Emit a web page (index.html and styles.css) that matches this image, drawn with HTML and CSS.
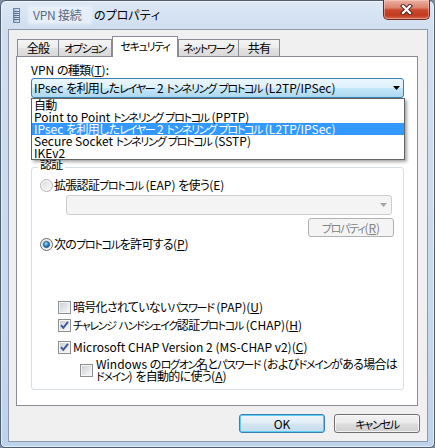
FILE: index.html
```html
<!DOCTYPE html>
<html lang="ja">
<head>
<meta charset="utf-8">
<title>VPN 接続 のプロパティ</title>
<link rel="stylesheet" href="styles.css">
</head>
<body>
<svg class="defs" width="0" height="0" aria-hidden="true">
  <defs>
    <linearGradient id="rdis" x1="0" y1="0" x2="1" y2="1">
      <stop offset="0" stop-color="#dcdcdc"/>
      <stop offset="1" stop-color="#fafafa"/>
    </linearGradient>
    <linearGradient id="rnorm" x1="0" y1="0" x2="1" y2="1">
      <stop offset="0" stop-color="#c9cdd2"/>
      <stop offset="1" stop-color="#f7f7f7"/>
    </linearGradient>
    <radialGradient id="rdot" cx="0.4" cy="0.35" r="0.7">
      <stop offset="0" stop-color="#a6e0fb"/>
      <stop offset="0.55" stop-color="#2f86c8"/>
      <stop offset="1" stop-color="#174f8c"/>
    </radialGradient>
    <linearGradient id="cbg" x1="0" y1="0" x2="1" y2="1">
      <stop offset="0" stop-color="#cdd1d7"/>
      <stop offset="1" stop-color="#f7f7f7"/>
    </linearGradient>
    <linearGradient id="icong" x1="0" y1="0" x2="1" y2="0">
      <stop offset="0" stop-color="#9fb4cc"/>
      <stop offset="1" stop-color="#e4ecf5"/>
    </linearGradient>
  </defs>
</svg>

<div class="window">
  <div class="titlebar">
    <svg class="app-icon" width="7" height="15" viewBox="0 0 7 15">
      <rect x="0.5" y="0.5" width="6" height="14" fill="url(#icong)" stroke="#6d84a3"/>
      <path d="M1 3.5h5M1 5.5h5M1 7.5h5M1 9.5h5M1 11.5h5" stroke="#5b7498" stroke-width="1"/>
    </svg>
    <div class="title"><span class="title-name">VPN 接続</span><span class="title-rest">のプロパティ</span></div>
    <div class="close-btn">
      <svg width="13" height="11" viewBox="0 0 13 11">
        <path d="M3 2L10 9M10 2L3 9" stroke="#4a2a24" stroke-width="4.2" stroke-linecap="square"/>
        <path d="M3 2L10 9M10 2L3 9" stroke="#ffffff" stroke-width="2.2" stroke-linecap="square"/>
      </svg>
    </div>
  </div>

  <div class="client">
    <div class="tabs">
      <div class="tab tab-general"><span class="ja">全般</span></div>
      <div class="tab tab-options"><span class="ka">オプション</span></div>
      <div class="tab tab-active tab-security"><span class="ka">セキュリティ</span></div>
      <div class="tab tab-network"><span class="ka">ネットワーク</span></div>
      <div class="tab tab-sharing"><span class="ja">共有</span></div>
    </div>

    <div class="panel">
      <div class="field-label">VPN <span class="ja">の種類</span>(<u>T</u>):</div>
      <div class="combo-wrap">
        <div class="combo combo-hot">
          <span class="combo-text">IPsec <span class="ja">を利用した<span class="ka">レイヤー</span></span> 2 <span class="ka">トンネリング</span> <span class="ka">プロトコル</span> (L2TP/IPSec)</span>
          <svg class="combo-arrow" width="7" height="4" viewBox="0 0 7 4"><path d="M0 0h7L3.5 4z" fill="#000"/></svg>
        </div>
        <ul class="dropdown">
          <li class="dropdown-item"><span class="ja">自動</span></li>
          <li class="dropdown-item">Point to Point <span class="ka">トンネリング</span> <span class="ka">プロトコル</span> (PPTP)</li>
          <li class="dropdown-item is-selected">IPsec <span class="ja">を利用した<span class="ka">レイヤー</span></span> 2 <span class="ka">トンネリング</span> <span class="ka">プロトコル</span> (L2TP/IPSec)</li>
          <li class="dropdown-item">Secure Socket <span class="ka">トンネリング</span> <span class="ka">プロトコル</span> (SSTP)</li>
          <li class="dropdown-item">IKEv2</li>
        </ul>
      </div>

      <div class="group">
        <div class="group-title"><span class="ja">認証</span></div>

        <div class="row radio-row">
          <svg class="radio" width="13" height="13" viewBox="0 0 13 13">
            <circle cx="6.5" cy="6.5" r="6" fill="#f4f4f4" stroke="#b5b5b5"/>
            <circle cx="6.5" cy="6.5" r="4" fill="url(#rdis)"/>
          </svg>
          <span class="row-text"><span class="ja">拡張認証<span class="ka">プロトコル</span></span> (EAP) <span class="ja">を使う</span>(E)</span>
        </div>

        <div class="combo combo-disabled">
          <span class="combo-text"></span>
          <svg class="combo-arrow" width="7" height="4" viewBox="0 0 7 4"><path d="M0 0h7L3.5 4z" fill="#a3a3a3"/></svg>
        </div>

        <div class="btn btn-disabled btn-props"><span class="ka">プロパティ</span>(<u>R</u>)</div>

        <div class="row radio-row">
          <svg class="radio" width="13" height="13" viewBox="0 0 13 13">
            <circle cx="6.5" cy="6.5" r="6" fill="#f3f3f3" stroke="#6a6a6a"/>
            <circle cx="6.5" cy="6.5" r="4.6" fill="url(#rnorm)"/>
            <circle cx="6.5" cy="6.5" r="3.1" fill="url(#rdot)" stroke="#1d4a78" stroke-width="0.7"/>
          </svg>
          <span class="row-text"><span class="ja">次の<span class="ka">プロトコル</span>を許可する</span>(<u>P</u>)</span>
        </div>

        <div class="row check-row check-pap">
          <svg class="check" width="13" height="13" viewBox="0 0 13 13">
            <rect x="0.5" y="0.5" width="12" height="12" fill="#f5f5f5" stroke="#8e8f8f"/>
            <rect x="2" y="2" width="9" height="9" fill="url(#cbg)"/>
          </svg>
          <span class="row-text"><span class="ja">暗号化されていない<span class="ka">パスワード</span></span> (PAP)(<u>U</u>)</span>
        </div>

        <div class="row check-row check-chap">
          <svg class="check" width="13" height="13" viewBox="0 0 13 13">
            <rect x="0.5" y="0.5" width="12" height="12" fill="#f5f5f5" stroke="#8e8f8f"/>
            <rect x="2" y="2" width="9" height="9" fill="url(#cbg)"/>
            <path d="M3 6.2L5.3 8.8L10 2.8" fill="none" stroke="#3f5795" stroke-width="1.9"/>
          </svg>
          <span class="row-text"><span class="ka">チャレンジ</span> <span class="ka">ハンドシェイク</span><span class="ja">認証</span><span class="ka">プロトコル</span> (CHAP)(<u>H</u>)</span>
        </div>

        <div class="row check-row check-mschap">
          <svg class="check" width="13" height="13" viewBox="0 0 13 13">
            <rect x="0.5" y="0.5" width="12" height="12" fill="#f5f5f5" stroke="#8e8f8f"/>
            <rect x="2" y="2" width="9" height="9" fill="url(#cbg)"/>
            <path d="M3 6.2L5.3 8.8L10 2.8" fill="none" stroke="#3f5795" stroke-width="1.9"/>
          </svg>
          <span class="row-text">Microsoft CHAP Version 2 (MS-CHAP v2)(<u>C</u>)</span>
        </div>

        <div class="row check-row check-logon">
          <svg class="check" width="13" height="13" viewBox="0 0 13 13">
            <rect x="0.5" y="0.5" width="12" height="12" fill="#f5f5f5" stroke="#8e8f8f"/>
            <rect x="2" y="2" width="9" height="9" fill="url(#cbg)"/>
          </svg>
          <span class="row-text row-text-multi">Windows <span class="ja">の<span class="ka">ログオン</span>名と<span class="ka">パスワード</span></span> (<span class="ja">および<span class="ka">ドメイン</span>がある場合は</span><br><span class="ka">ドメイン</span>) <span class="ja">を自動的に使う</span>(<u>A</u>)</span>
        </div>
      </div>
    </div>

    <div class="buttons">
      <div class="btn btn-default">OK</div>
      <div class="btn"><span class="ka">キャンセル</span></div>
    </div>
  </div>
</div>
</body>
</html>
```

FILE: styles.css
```css
* {
  box-sizing: border-box;
}

html,
body {
  margin: 0;
  padding: 0;
}

body {
  width: 435px;
  height: 448px;
  overflow: hidden;
  background: #7d8ea3;
  font-family: "Noto Sans CJK JP", "Liberation Sans", sans-serif;
  font-size: 12px;
  color: #000;
  font-feature-settings: "palt";
}

.defs {
  display: block;
  width: 0;
  height: 0;
}

u {
  text-decoration: underline;
  text-underline-offset: 1px;
}

/* Japanese runs: narrower, like the dialog's bitmap UI font */
.ja {
  letter-spacing: -0.7px;
}

.ka {
  font-size: 11px;
  letter-spacing: -1.3px;
}

/* ---------- window frame ---------- */
.window {
  width: 435px;
  height: 448px;
  display: flex;
  flex-direction: column;
  padding: 0 6px 5px 7px;
  border: 1px solid #4f5d6e;
  border-radius: 6px 6px 5px 5px;
  background: linear-gradient(180deg, #dde8f4 0, #d0def0 28px, #c6d9ee 70%, #bdd3eb 100%);
  box-shadow: inset 0 0 0 1px rgba(255, 255, 255, 0.55);
}

.titlebar {
  height: 28px;
  margin: 0 -6px 0 -7px;
  padding: 0 4px 0 12px;
  display: flex;
  align-items: flex-start;
  flex: none;
}

.app-icon {
  margin-top: 7px;
  flex: none;
}

.title {
  display: flex;
  align-items: center;
  margin-top: 6px;
  font-size: 12px;
  line-height: 16px;
  font-feature-settings: normal;
}

.title-name {
  margin-left: 9px;
  padding: 0 9px 0 4px;
  color: #5b6a80;
  background: rgba(232, 240, 250, 0.85);
  box-shadow: 0 0 3px 1px rgba(232, 240, 250, 0.85);
  letter-spacing: -0.2px;
}

.title-rest {
  margin-left: 3px;
  letter-spacing: -0.6px;
  color: #000;
}

.close-btn {
  margin-left: auto;
  margin-top: -1px;
  width: 47px;
  height: 20px;
  display: flex;
  align-items: center;
  justify-content: center;
  border: 1px solid #6b2a20;
  border-top: none;
  border-radius: 0 0 5px 5px;
  background: linear-gradient(180deg, #eab1a3 0%, #dc8470 40%, #c9492f 52%, #c13a1e 80%, #d5684c 100%);
  box-shadow: inset 0 0 0 1px rgba(255, 220, 210, 0.45);
}

/* ---------- client area ---------- */
.client {
  flex: 1;
  display: flex;
  flex-direction: column;
  background: #f0f0f0;
  border: 1px solid #8d9aab;
  padding-top: 6px;
}

.tabs {
  display: flex;
  align-items: flex-end;
  height: 20px;
  margin-left: 8px;
  flex: none;
}

.tab {
  height: 17px;
  line-height: 16px;
  text-align: center;
  border: 1px solid #898c95;
  border-bottom: none;
  background: linear-gradient(180deg, #f4f4f4 0%, #ececec 50%, #e2e2e2 51%, #d9d9d9 100%);
  white-space: nowrap;
}

.tab-general { width: 42px; }
.tab-options { width: 54px; margin-left: -1px; }
.tab-security { width: 66px; }
.tab-network { width: 61px; }
.tab-sharing { width: 42px; margin-left: -1px; }

.tab-active {
  position: relative;
  z-index: 1;
  height: 21px;
  margin-bottom: -1px;
  padding-top: 1px;
  background: #fff;
}

.panel {
  height: 350px;
  margin: 0 9px 0 7px;
  padding: 5px 13px 0 14px;
  background: #fff;
  border: 1px solid #898c95;
  flex: none;
}

.field-label {
  height: 15px;
  line-height: 15px;
  white-space: nowrap;
}

.combo-wrap {
  position: relative;
  margin-top: 1px;
}

.combo {
  height: 20px;
  display: flex;
  align-items: center;
  justify-content: space-between;
  padding: 0 3px 0 2px;
  border-radius: 3px;
  white-space: nowrap;
}

.combo-text {
  line-height: 18px;
}

.combo-arrow {
  flex: none;
}

.combo-hot {
  border: 1px solid #3c7fb1;
  background: linear-gradient(180deg, #ebf6fd 0%, #dcf1fc 48%, #c4e6f8 52%, #add9f2 100%);
}

.combo-disabled {
  margin: 3px 11px 0 26px;
  align-self: stretch;
  border: 1px solid #cdcdcd;
  background: #f4f4f4;
  padding-right: 4px;
}

.dropdown {
  position: absolute;
  top: 20px;
  left: 0;
  z-index: 5;
  width: 374px;
  margin: 0;
  padding: 0;
  list-style: none;
  background: #fff;
  border: 1px solid #646464;
  box-shadow: 2px 2px 3px rgba(0, 0, 0, 0.35);
}

.dropdown-item {
  height: 12px;
  line-height: 12px;
  padding-left: 2px;
  white-space: nowrap;
}

.dropdown-item.is-selected {
  background: #3399ff;
  color: #fff;
}

/* ---------- group box ---------- */
.group {
  position: relative;
  margin-top: 69px;
  height: 223px;
  display: flex;
  flex-direction: column;
  align-items: flex-start;
  padding: 10px 0 7px 8px;
  border: 1px solid #d5dfe5;
  border-radius: 3px;
}

.group-title {
  position: absolute;
  top: -11px;
  left: 6px;
  padding: 0 2px;
  line-height: 14px;
  background: #fff;
}

.row {
  display: flex;
  align-items: center;
  white-space: nowrap;
}

.row-text {
  line-height: 14px;
}

.radio-row {
  height: 14px;
}

.radio {
  flex: none;
  margin-right: 1px;
}

.btn-props {
  align-self: flex-end;
  width: 86px;
  height: 19px;
  margin: 3px 9px 0 0;
}

.check-row {
  height: 14px;
  margin-left: 18px;
}

.check {
  flex: none;
  margin-right: 2px;
}

.check-pap { margin-top: 49px; }
.check-chap { margin-top: 4px; }
.check-mschap { margin-top: 8px; }

.check-logon {
  height: 24px;
  margin-top: 4px;
  margin-left: 40px;
}

.check-logon .check {
  margin-right: 3px;
}

.row-text-multi {
  line-height: 12px;
}

/* ---------- buttons ---------- */
.btn {
  display: flex;
  align-items: center;
  justify-content: center;
  height: 19px;
  width: 86px;
  border: 1px solid #707070;
  border-radius: 3px;
  background: linear-gradient(180deg, #f2f2f2 0%, #ebebeb 48%, #dddddd 52%, #cfcfcf 100%);
  box-shadow: inset 0 0 0 1px rgba(255, 255, 255, 0.7);
  line-height: 16px;
  white-space: nowrap;
}

.btn-disabled {
  border-color: #adb2b5;
  background: #f4f4f4;
  color: #838383;
  box-shadow: none;
}

.btn-default {
  border-color: #3c7fb1;
  background: linear-gradient(180deg, #eef5fa 0%, #e1edf6 48%, #d3e5f2 52%, #c6dcec 100%);
  box-shadow: inset 0 0 0 1px #5fcdf5;
}

.buttons {
  display: flex;
  justify-content: flex-end;
  gap: 9px;
  margin-top: 8px;
  padding-right: 7px;
  flex: none;
}
```
